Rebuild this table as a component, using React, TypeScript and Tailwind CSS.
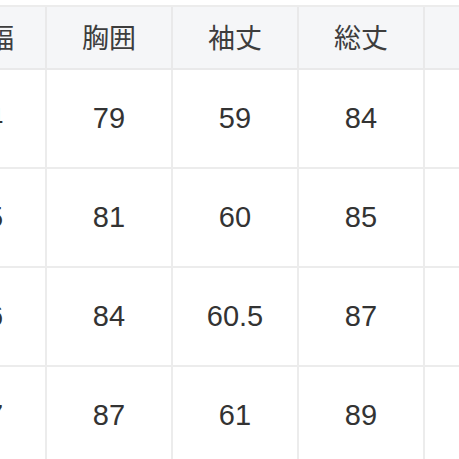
const headers = ['肩幅', '胸囲', '袖丈', '総丈', '裄丈'];

const rows = [
  ['34', '79', '59', '84', '76'],
  ['35', '81', '60', '85', '78'],
  ['36', '84', '60.5', '87', '80'],
  ['37', '87', '61', '89', '81'],
];

export default function App() {
  return (
    <div
      className="w-[459px] h-[459px] overflow-hidden bg-white pt-[5px]"
      style={{ fontFamily: '"Liberation Sans", "Noto Sans CJK JP", sans-serif' }}
    >
      <div className="ml-[-79px] w-max border-t-2 border-[#ececec] text-[#333]">
        <div className="flex bg-[#f5f6f8]">
          {headers.map((h, j) => (
            <div
              key={h}
              className={`${j === 0 ? 'pl-[8px]' : ''} w-[126px] h-[63px] flex items-center justify-center border-r-2 border-b-2 border-[#e9e9ea] text-[27px] text-[#3d3d3d]`}
              style={{ fontFamily: '"Noto Sans CJK JP", sans-serif' }}
            >
              {h}
            </div>
          ))}
        </div>
        {rows.map((r, i) => (
          <div key={i} className="flex">
            {r.map((v, j) => (
              <div
                key={j}
                className={`${j === 0 ? 'pl-[8px]' : ''} w-[126px] h-[99px] flex items-center justify-center border-r-2 border-b-2 border-[#ececec] text-[29px]`}
              >
                {j < 4 ? v : ''}
              </div>
            ))}
          </div>
        ))}
      </div>
    </div>
  );
}
